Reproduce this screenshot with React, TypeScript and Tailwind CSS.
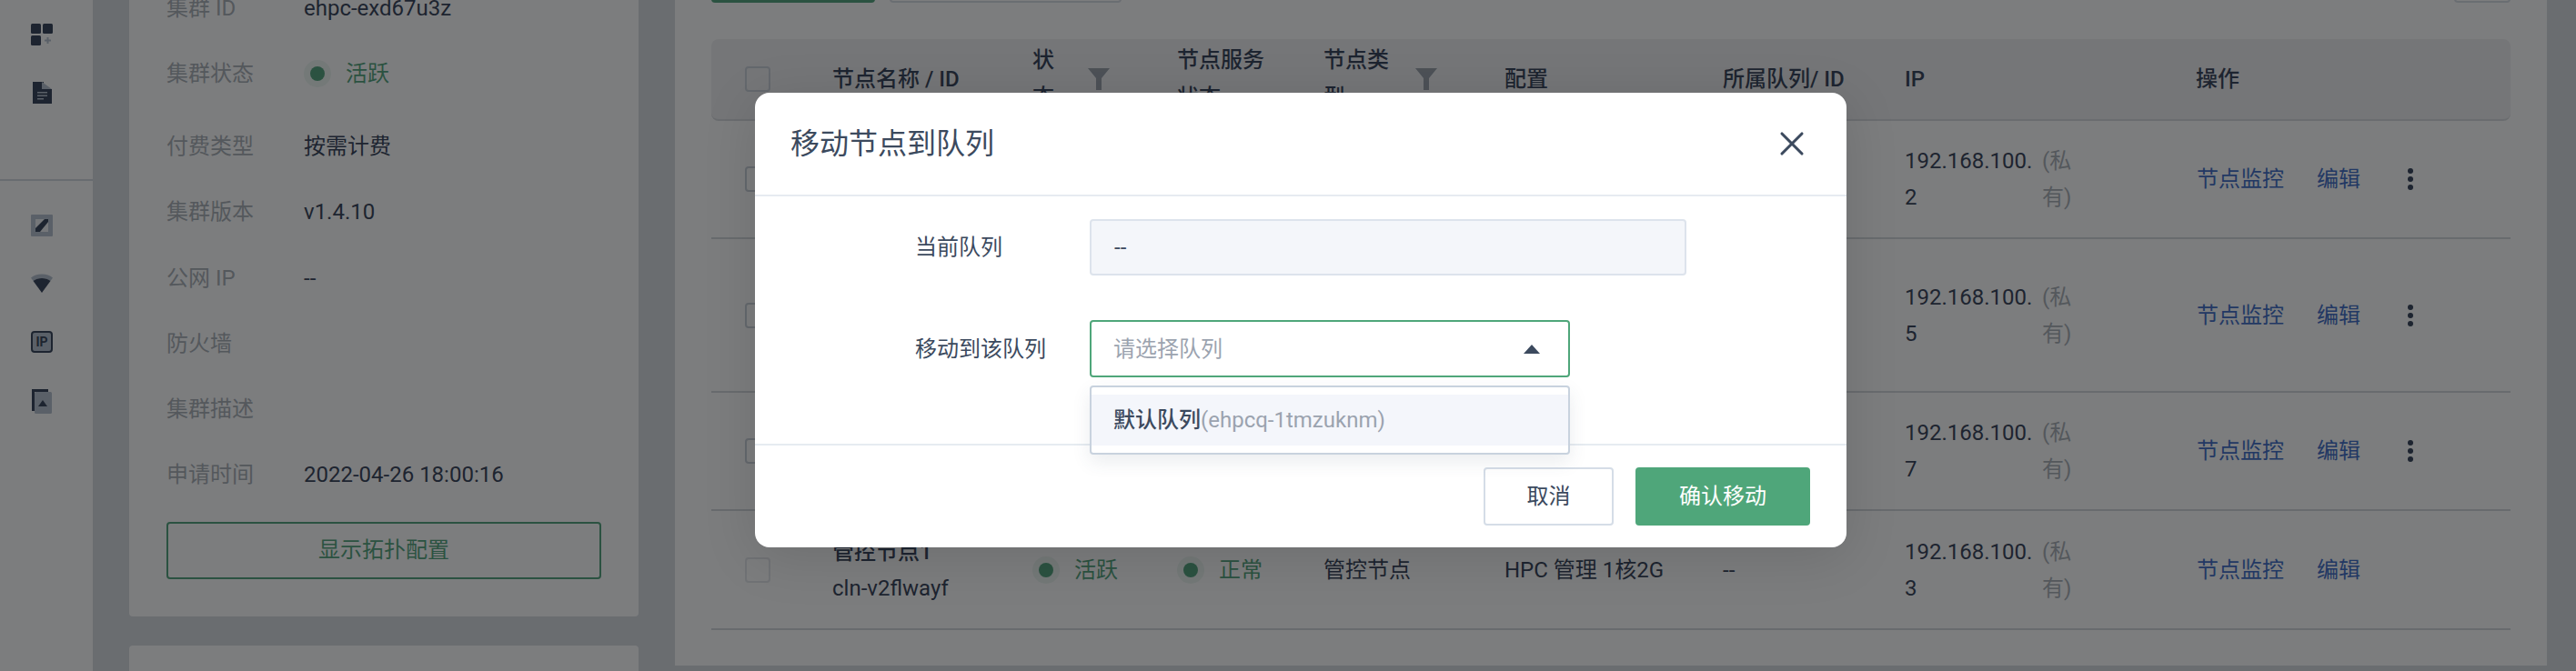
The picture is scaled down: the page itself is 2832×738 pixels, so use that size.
import { X } from "lucide-react";

type NodeRow = {
  heightClass: string;
  ip: string;
  more: boolean;
  name?: string;
  id?: string;
  type?: string;
  config?: string;
  queue?: string;
};

const rows: NodeRow[] = [
  { heightClass: "h-[130px]", ip: "192.168.100.2", more: true },
  { heightClass: "h-[169px]", ip: "192.168.100.5", more: true },
  { heightClass: "h-[130px]", ip: "192.168.100.7", more: true },
  {
    heightClass: "h-[131px]",
    ip: "192.168.100.3",
    more: false,
    name: "管控节点1",
    id: "cln-v2flwayf",
    type: "管控节点",
    config: "HPC 管理 1核2G",
    queue: "--",
  },
];

const infoRows = [
  { label: "付费类型", value: "按需计费" },
  { label: "集群版本", value: "v1.4.10" },
  { label: "公网 IP", value: "--" },
  { label: "防火墙", value: "" },
  { label: "集群描述", value: "" },
  { label: "申请时间", value: "2022-04-26 18:00:16" },
];

function StatusDot({ label }: { label: string }) {
  return (
    <span className="flex items-center gap-[16px] text-[#3f9a6e]">
      <span className="flex h-[30px] w-[30px] items-center justify-center rounded-full bg-[#3f9a6e]/10">
        <span className="h-[16px] w-[16px] rounded-full bg-[#3f9a6e]" />
      </span>
      {label}
    </span>
  );
}

function FilterIcon() {
  return (
    <svg width="24" height="24" viewBox="0 0 24 24" className="shrink-0">
      <path d="M0 0h24l-9 11v13h-6V11z" fill="#8f97a3" />
    </svg>
  );
}

function Checkbox({ disabled }: { disabled?: boolean }) {
  return (
    <span
      className={`block h-[28px] w-[28px] rounded-[4px] border-2 ${
        disabled ? "border-[#e2e5e9]" : "border-[#c5ccd6]"
      }`}
    />
  );
}

function Sidebar() {
  return (
    <aside className="flex h-full w-[102px] shrink-0 flex-col bg-white">
      <div className="flex h-[199px] flex-col gap-[40px] border-b-2 border-[#cfd6de] pl-[34px] pt-[26px]">
        <svg width="24" height="24" viewBox="0 0 24 24">
          <rect width="11" height="11" rx="1.5" fill="#1d2c45" />
          <rect x="13" width="11" height="11" rx="1.5" fill="#1d2c45" />
          <rect y="13" width="11" height="11" rx="1.5" fill="#1d2c45" />
          <path d="M17.5 15h2v2.500H22v2h-2.500V22h-2v-2.500H15v-2h2.500z" fill="#afbbca" />
        </svg>
        <svg width="24" height="24" viewBox="0 0 24 24">
          <path d="M2 0h12v8h9v16H2z" fill="#1d2c45" />
          <path d="M12 0l11 8H12z" fill="#afbbca" />
          <path d="M7 11h11v1.500H7zM7 14.500h11V16H7zM7 18h7v1.500H7z" fill="#afbbca" />
        </svg>
      </div>
      <div className="flex flex-col gap-[40px] pl-[34px] pt-[37px]">
        <svg width="24" height="24" viewBox="0 0 24 24">
          <rect width="24" height="24" rx="1" fill="#afbbca" />
          <rect x="5" y="5" width="14" height="14" fill="#eef1f5" />
          <path d="M15 5h4v3L10 19H5v-4z" fill="#1d2c45" />
        </svg>
        <svg width="24" height="24" viewBox="0 0 24 24">
          <path d="M0 5.500C3 3 7 1.500 12 1.500S21 3 24 5.500L21.500 9C19 7 16 6 12 6S5 7 2.500 9z" fill="#afbbca" />
          <path d="M2.500 9C5 7 8 6 12 6s7 1 9.500 3L12 22z" fill="#1d2c45" />
        </svg>
        <svg width="24" height="24" viewBox="0 0 24 24">
          <rect x="1" y="1" width="22" height="22" rx="3" fill="#afbbca" stroke="#1d2c45" strokeWidth="2" />
          <text
            x="12"
            y="17"
            textAnchor="middle"
            fontSize="14"
            fontWeight="700"
            fontFamily="Roboto, sans-serif"
            fill="#1d2c45"
          >
            IP
          </text>
        </svg>
        <svg width="24" height="28" viewBox="0 0 24 28">
          <path d="M1 0h18v3H4v21H1z" fill="#1d2c45" />
          <rect x="4" y="3" width="19" height="24" rx="1.500" fill="#afbbca" />
          <path d="M13 12l5 7H8z" fill="#1d2c45" />
        </svg>
      </div>
    </aside>
  );
}

function InfoPanel() {
  return (
    <div className="flex w-[560px] shrink-0 flex-col gap-[32px]">
      <section className="h-[778px] rounded-[4px] bg-white px-[41px] pt-[89px] text-[24px] leading-[40px]">
        <div className="flex h-[72px]">
          <span className="w-[151px] text-[#a1a7af]">集群 ID</span>
          <span>ehpc-exd67u3z</span>
        </div>
        <div className="flex h-[80px]">
          <span className="w-[151px] text-[#a1a7af]">集群状态</span>
          <span className="flex h-[40px] items-center">
            <StatusDot label="活跃" />
          </span>
        </div>
        {infoRows.map((row) => (
          <div key={row.label} className="flex h-[72.3px]">
            <span className="w-[151px] text-[#a1a7af]">{row.label}</span>
            <span>{row.value}</span>
          </div>
        ))}
        <button
          type="button"
          className="-mt-[1px] block h-[63px] w-full rounded-[4px] border-2 border-[#3f9a6e] text-[#3f9a6e]"
        >
          显示拓扑配置
        </button>
      </section>
      <section className="h-[200px] rounded-[4px] bg-white" />
    </div>
  );
}

function NodeTable() {
  return (
    <section className="h-[832px] w-[2058px] shrink-0 bg-white px-[40px] pt-[39px] text-[24px] leading-[40px]">
      <div className="flex h-[64px] gap-[16px]">
        <button type="button" className="w-[180px] rounded-[4px] bg-[#3f9a6e]" />
        <button type="button" className="w-[255px] rounded-[4px] border-2 border-[#d5dbe3]" />
        <button type="button" className="ml-auto w-[62px] rounded-[4px] border-2 border-[#d5dbe3]" />
      </div>
      <div className="mt-[40px] grid h-[90px] grid-cols-[133px_220px_159px_161px_199px_240px_200px_320px_1fr] items-center rounded-[8px] border-b-2 border-[#d3d6db] bg-[#eeeff1] font-medium leading-[41px]">
        <div className="pl-[37px]">
          <Checkbox />
        </div>
        <div>节点名称 / ID</div>
        <div className="flex items-center gap-[37px]">
          <span className="w-[24px]">状态</span>
          <FilterIcon />
        </div>
        <div className="w-[100px]">节点服务状态</div>
        <div className="flex items-center gap-[29px]">
          <span className="w-[72px]">节点类型</span>
          <FilterIcon />
        </div>
        <div>配置</div>
        <div>所属队列/ ID</div>
        <div>IP</div>
        <div>操作</div>
      </div>
      {rows.map((row) => (
        <div
          key={row.ip}
          className={`grid grid-cols-[133px_220px_159px_161px_199px_240px_200px_320px_1fr] items-center border-b-2 border-[#d0d3d9] ${row.heightClass}`}
        >
          <div className="pl-[37px]">
            <Checkbox disabled={!row.more} />
          </div>
          <div>
            {row.name && <div className="font-medium">{row.name}</div>}
            {row.id && <div>{row.id}</div>}
          </div>
          <div>{row.name && <StatusDot label="活跃" />}</div>
          <div>{row.name && <StatusDot label="正常" />}</div>
          <div>{row.type}</div>
          <div>{row.config}</div>
          <div>{row.queue}</div>
          <div className="flex items-center">
            <span className="w-[151px] break-all">{row.ip}</span>
            <span className="w-[40px] break-all text-[#a1a7af]">(私有)</span>
          </div>
          <div className="flex items-center pl-[1px] text-[#2a5cc0]">
            <span>节点监控</span>
            <span className="ml-[36px]">编辑</span>
            {row.more && (
              <span className="ml-[52px] flex flex-col gap-[3px]">
                <span className="h-[6px] w-[6px] rounded-full bg-[#1d2c45]" />
                <span className="h-[6px] w-[6px] rounded-full bg-[#1d2c45]" />
                <span className="h-[6px] w-[6px] rounded-full bg-[#1d2c45]" />
              </span>
            )}
          </div>
        </div>
      ))}
    </section>
  );
}

function MoveDialog() {
  return (
    <div className="absolute left-[830px] top-[102px] h-[500px] w-[1200px] rounded-[16px] bg-white text-[24px] leading-[40px] text-[#3c4a5e] shadow-[0_10px_60px_rgba(0,0,0,0.12)]">
      <header className="flex h-[114px] items-center justify-between border-b-2 border-[#e6ebf1] pl-[39px] pr-[38px]">
        <h2 className="text-[32px] font-normal leading-[44px]">移动节点到队列</h2>
        <X size={44} strokeWidth={1.7} className="text-[#3c4a5e]" />
      </header>
      <div className="relative h-[274px] border-b-2 border-[#e6ebf1] pl-[176px] pt-[25px]">
        <div className="flex items-center">
          <span className="w-[192px]">当前队列</span>
          <div className="flex h-[62px] w-[656px] items-center rounded-[4px] border-2 border-[#dde3ec] bg-[#f4f6fa] pl-[25px]">
            --
          </div>
        </div>
        <div className="mt-[49px] flex items-center">
          <span className="w-[192px]">移动到该队列</span>
          <div className="flex h-[63px] w-[528px] items-center justify-between rounded-[4px] border-2 border-[#4fa67a] pl-[24px] pr-[31px] text-[#9ba3af]">
            请选择队列
            <svg width="18" height="10" viewBox="0 0 18 10">
              <path d="M9 0l9 10H0z" fill="#3c4a5e" />
            </svg>
          </div>
        </div>
        <div className="absolute left-[368px] top-[208px] z-10 w-[528px] rounded-[4px] border-2 border-[#c8d2de] bg-white py-[8px] shadow-[0_8px_20px_rgba(60,74,94,0.1)]">
          <div className="flex h-[56px] items-center bg-[#f4f6fb] pl-[24px]">
            <span className="font-medium">默认队列</span>
            <span className="text-[#9ba3af]">(ehpcq-1tmzuknm)</span>
          </div>
        </div>
      </div>
      <footer className="flex justify-end gap-[24px] pr-[40px] pt-[24px]">
        <button type="button" className="h-[64px] w-[143px] rounded-[4px] border-2 border-[#d5dde7] bg-white">
          取消
        </button>
        <button type="button" className="h-[64px] w-[192px] rounded-[4px] bg-[#4fa67a] text-white">
          确认移动
        </button>
      </footer>
    </div>
  );
}

export default function App() {
  return (
    <div className="relative flex h-[738px] w-[2832px] overflow-hidden bg-[#d3d8de] font-['Roboto','Noto_Sans_CJK_SC',sans-serif] text-[#1d2c45]">
      <Sidebar />
      <main className="-mt-[100px] flex items-start gap-[40px] pl-[40px]">
        <InfoPanel />
        <NodeTable />
      </main>
      <div className="absolute inset-0 bg-[#1e1f20]/[0.58]" />
      <MoveDialog />
    </div>
  );
}
